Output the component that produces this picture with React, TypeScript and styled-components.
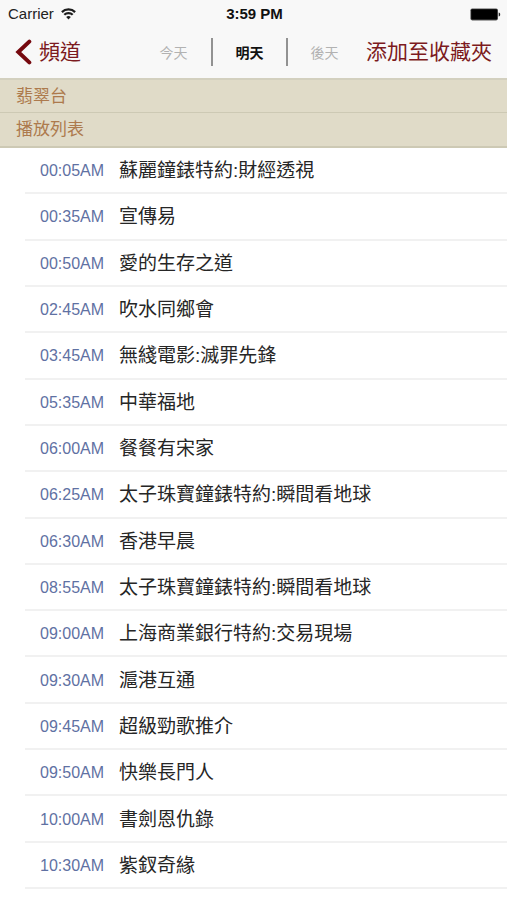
import React, { useState } from 'react';
import styled, { createGlobalStyle } from 'styled-components';

const GlobalStyle = createGlobalStyle`
  *, *::before, *::after { box-sizing: border-box; }
  body {
    margin: 0;
    background: #fff;
    color: #222;
    font-family: 'Liberation Sans', 'Noto Sans CJK TC', sans-serif;
  }
`;

const Page = styled.div`
  display: flex;
  flex-direction: column;
  min-height: 100vh;
`;

const TopArea = styled.header`
  background: #f8f8f8;
`;

const StatusBar = styled.div`
  display: grid;
  grid-template-columns: 1fr auto 1fr;
  align-items: center;
  height: 28px;
  padding: 0 6px 0 8px;
  font-size: 15px;
  line-height: 20px;
  color: #222;
`;

const Signal = styled.div`
  display: flex;
  align-items: center;
  gap: 7px;
`;

const Clock = styled.time`
  font-weight: 700;
  color: #111;
`;

const BatteryIcon = styled.svg`
  justify-self: end;
`;

const NavBar = styled.nav`
  display: flex;
  align-items: center;
  gap: 5px;
  height: 50px;
  padding: 0 15px 2px;
`;

const NavButton = styled.button`
  display: flex;
  align-items: center;
  gap: 7px;
  padding: 0;
  border: 0;
  background: none;
  font: inherit;
  font-size: 21px;
  line-height: 28px;
  color: #7c1a20;
  white-space: nowrap;
  cursor: pointer;
`;

const DaySwitch = styled.div`
  display: flex;
  align-items: center;
  margin-left: auto;
`;

const DayButton = styled.button<{ $active: boolean }>`
  width: 75px;
  height: 28px;
  padding: 0;
  border: 0;
  background: none;
  font: inherit;
  font-size: 14px;
  font-weight: ${(p) => (p.$active ? 700 : 400)};
  color: ${(p) => (p.$active ? '#111' : '#b2b2b2')};
  cursor: pointer;

  & + & {
    border-left: 2px solid #929292;
  }
`;

const SectionTitle = styled.h2`
  margin: 0;
  height: 35px;
  padding: 0 16px;
  border-bottom: 2px solid #cdc9b4;
  background: #e0dbc8;
  font-size: 17px;
  font-weight: 400;
  line-height: 34px;
  color: #ad7a4d;
`;

const ChannelTitle = styled(SectionTitle)`
  border-top: 2px solid #d3d0bf;
  border-bottom-width: 1px;
`;

const ProgramList = styled.ul`
  flex: 1;
  display: grid;
  grid-auto-rows: minmax(46px, 1fr);
  margin: 0;
  padding: 0 0 11px 25px;
  list-style: none;
`;

const ProgramRow = styled.li`
  display: flex;
  align-items: center;
  gap: 15px;
  padding: 2px 0 0 15px;
  border-bottom: 2px solid #f1f1f1;
`;

const StartTime = styled.time`
  width: 64px;
  text-align: right;
  font-size: 16px;
  line-height: 24px;
  color: #5f71a3;
`;

const ProgramTitle = styled.span`
  font-size: 19px;
  line-height: 28px;
  color: #262626;
`;

const days = ['今天', '明天', '後天'];

const programs = [
  ['00:05AM', '蘇麗鐘錶特約:財經透視'],
  ['00:35AM', '宣傳易'],
  ['00:50AM', '愛的生存之道'],
  ['02:45AM', '吹水同鄉會'],
  ['03:45AM', '無綫電影:滅罪先鋒'],
  ['05:35AM', '中華福地'],
  ['06:00AM', '餐餐有宋家'],
  ['06:25AM', '太子珠寶鐘錶特約:瞬間看地球'],
  ['06:30AM', '香港早晨'],
  ['08:55AM', '太子珠寶鐘錶特約:瞬間看地球'],
  ['09:00AM', '上海商業銀行特約:交易現場'],
  ['09:30AM', '滬港互通'],
  ['09:45AM', '超級勁歌推介'],
  ['09:50AM', '快樂長門人'],
  ['10:00AM', '書劍恩仇錄'],
  ['10:30AM', '紫釵奇緣'],
];

const Wifi = () => (
  <svg width="15" height="12" viewBox="0 0 15 12" fill="none" stroke="#1c1c1c" strokeWidth="2.2" aria-hidden="true">
    <path d="M0.9 4.1C4.5 0.5 10.5 0.5 14.1 4.1" />
    <path d="M3.3 6.8C5.6 4.5 9.4 4.5 11.7 6.8" />
    <path d="M7.5 11.4L5.2 8.9C6.5 7.7 8.5 7.7 9.8 8.9Z" fill="#1c1c1c" stroke="none" />
  </svg>
);

const Battery = () => (
  <BatteryIcon width="31" height="13" viewBox="0 0 31 13" aria-hidden="true">
    <rect x="0.4" y="0.4" width="27.6" height="12" rx="1.8" fill="#555" />
    <rect x="1.2" y="1.2" width="26" height="10.4" rx="1" fill="#000" />
    <path d="M28.7 4.4C30.7 4.9 30.7 7.9 28.7 8.4Z" fill="#222" />
  </BatteryIcon>
);

const Chevron = () => (
  <svg width="17" height="26" viewBox="0 0 17 26" fill="none" aria-hidden="true">
    <path d="M14.3 2.6L3.3 13L14.3 23.4" stroke="#76090f" strokeWidth="4" strokeLinecap="round" />
  </svg>
);

export default function App() {
  const [day, setDay] = useState('明天');

  return (
    <Page>
      <GlobalStyle />
      <TopArea>
        <StatusBar>
          <Signal>
            <span>Carrier</span>
            <Wifi />
          </Signal>
          <Clock>3:59 PM</Clock>
          <Battery />
        </StatusBar>
        <NavBar>
          <NavButton type="button">
            <Chevron />
            頻道
          </NavButton>
          <DaySwitch>
            {days.map((name) => (
              <DayButton
                key={name}
                type="button"
                $active={name === day}
                aria-pressed={name === day}
                onClick={() => setDay(name)}
              >
                {name}
              </DayButton>
            ))}
          </DaySwitch>
          <NavButton type="button">添加至收藏夾</NavButton>
        </NavBar>
      </TopArea>
      <ChannelTitle>翡翠台</ChannelTitle>
      <SectionTitle>播放列表</SectionTitle>
      <ProgramList>
        {programs.map(([time, title]) => (
          <ProgramRow key={time}>
            <StartTime>{time}</StartTime>
            <ProgramTitle>{title}</ProgramTitle>
          </ProgramRow>
        ))}
      </ProgramList>
    </Page>
  );
}
